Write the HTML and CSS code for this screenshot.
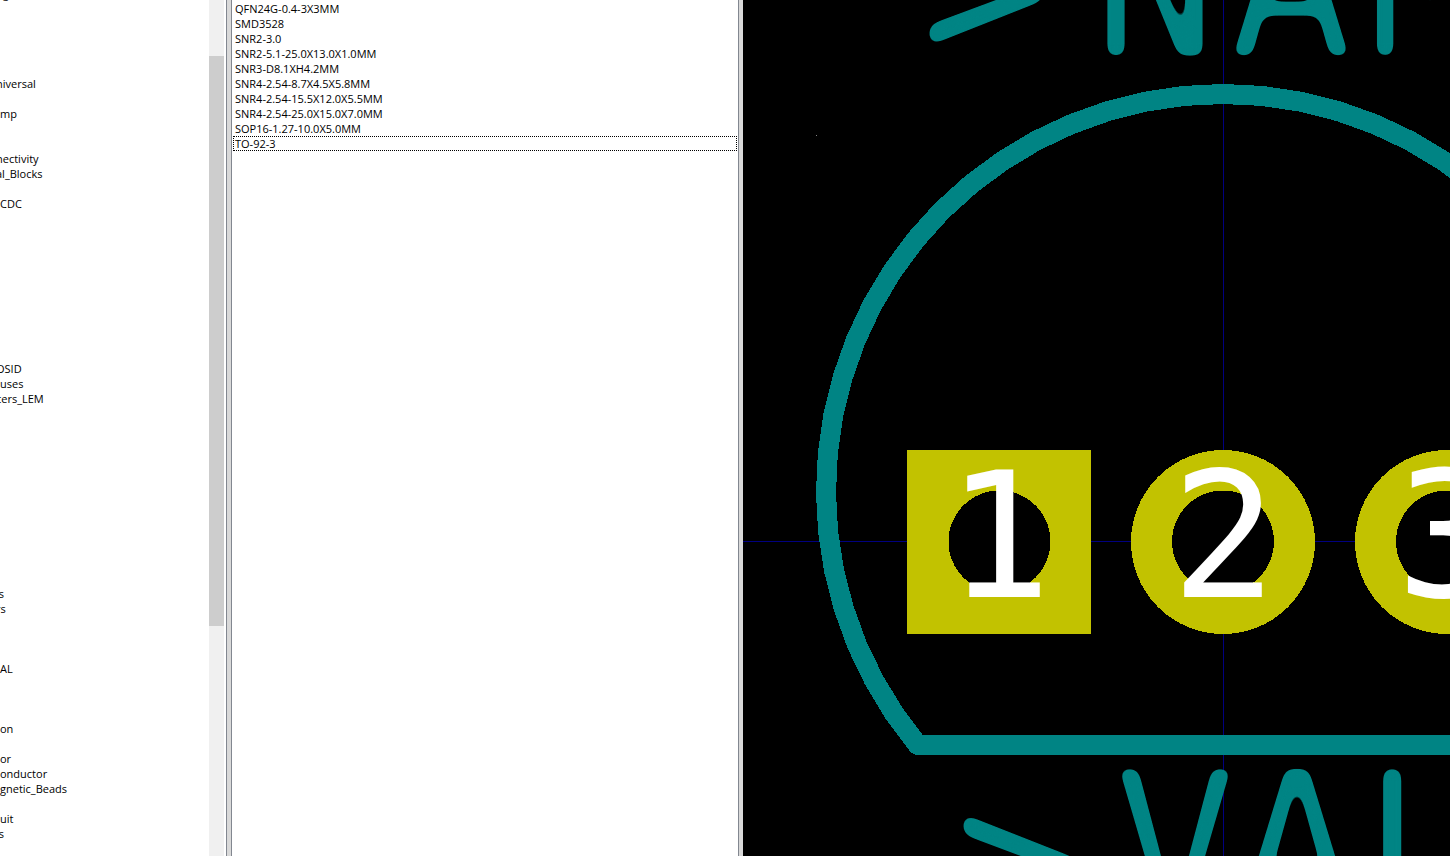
FILE: index.html
```html
<!DOCTYPE html>
<html lang="en">
<head>
<meta charset="utf-8">
<title>Footprint Library Browser</title>
<link rel="stylesheet" href="styles.css">
</head>
<body>
<main class="browser">
  <section class="pane libraries" aria-label="Libraries">
    <ul class="list library-list">
      <li>&nbsp;g</li><li></li><li></li><li></li><li></li><li></li>
      <li class="cut">niversal</li><li></li>
      <li>mp</li><li></li><li></li>
      <li class="cut">nectivity</li>
      <li class="cut">al_Blocks</li><li></li>
      <li>CDC</li><li></li><li></li><li></li><li></li><li></li><li></li><li></li><li></li><li></li><li></li>
      <li class="cut">OSID</li>
      <li>uses</li>
      <li class="cut">cers_LEM</li><li></li><li></li><li></li><li></li><li></li><li></li><li></li><li></li><li></li><li></li><li></li><li></li>
      <li class="cut">ls</li>
      <li class="cut">rs</li><li></li><li></li><li></li>
      <li>AL</li><li></li><li></li><li></li>
      <li>on</li><li></li>
      <li>or</li>
      <li>onductor</li>
      <li>gnetic_Beads</li><li></li>
      <li>uit</li>
      <li class="cut">ls</li><li></li>
    </ul>
    <div class="scrollbar"><div class="thumb"></div></div>
  </section>
  <div class="sash"></div>
  <section class="pane footprints" aria-label="Footprints">
    <ul class="list footprint-list">
      <li>QFN24G-0.4-3X3MM</li>
      <li>SMD3528</li>
      <li>SNR2-3.0</li>
      <li>SNR2-5.1-25.0X13.0X1.0MM</li>
      <li>SNR3-D8.1XH4.2MM</li>
      <li>SNR4-2.54-8.7X4.5X5.8MM</li>
      <li>SNR4-2.54-15.5X12.0X5.5MM</li>
      <li>SNR4-2.54-25.0X15.0X7.0MM</li>
      <li>SOP16-1.27-10.0X5.0MM</li>
      <li class="focused">TO-92-3</li>
    </ul>
  </section>
  <div class="sash"></div>
  <section class="canvas" aria-label="Footprint preview">
    <svg class="board" viewBox="743 0 707 856" preserveAspectRatio="xMidYMid slice">
      <defs>
        <filter id="pen" filterUnits="userSpaceOnUse" x="743" y="-160" width="900" height="1200" color-interpolation-filters="sRGB">
          <feGaussianBlur stdDeviation="6"/>
          <feComponentTransfer><feFuncA type="linear" slope="16" intercept="-9"/></feComponentTransfer>
        </filter>
        <filter id="wide-pen" filterUnits="userSpaceOnUse" x="743" y="-160" width="900" height="1200" color-interpolation-filters="sRGB">
          <feGaussianBlur stdDeviation="6"/>
          <feComponentTransfer><feFuncA type="linear" slope="16" intercept="-7"/></feComponentTransfer>
        </filter>
      </defs>
      <path class="axis" d="M743 541.5H1450M1223.5 0V856"/>
      <rect class="grid-dot" x="816" y="135" width="1" height="1"/>
      <path class="outline" d="M917.7 744.8L894.2 713.6L874 680.2L857 644.9L843.7 608.2L834 570.3L828.1 531.7L826 492.7L827.8 453.7L833.3 415L842.7 377.1L855.7 340.3L872.3 304.9L892.3 271.3L915.5 239.9L941.6 210.9L970.6 184.6L1001.9 161.3L1035.4 141.1L1070.7 124.4L1107.5 111.2L1145.3 101.7L1184 95.9L1223 94L1262 95.9L1300.7 101.7L1338.5 111.2L1375.3 124.4L1410.6 141.1L1444.1 161.3L1475.4 184.6L1528 745Z"/>
      <g class="silk">
        <text class="mark" x="920" y="60">&gt;</text>
        <text class="label" x="1155 1291 1430" y="57">NAM</text>
        <text class="mark" x="954" y="937">&gt;</text>
        <text class="label" x="1175 1297 1423" y="921">VAL</text>
      </g>
      <rect class="pad" x="907" y="450" width="184" height="184"/>
      <circle class="pad" cx="1223" cy="542" r="92"/>
      <circle class="pad" cx="1447" cy="542" r="92"/>
      <circle class="hole" cx="999.500" cy="541.500" r="51"/>
      <circle class="hole" cx="1223" cy="541.500" r="51"/>
      <circle class="hole" cx="1447" cy="541.500" r="51"/>
      <text class="pin" x="999" y="597">1</text>
      <text class="pin" x="1224" y="597">2</text>
      <text class="pin" x="1449" y="597">3</text>
    </svg>
  </section>
</main>
</body>
</html>
```
FILE: styles.css
```css
* {
  box-sizing: border-box;
}

body {
  margin: 0;
  background: #fff;
  color: #000;
  font: 11px/15px "Open Sans", "Noto Sans", sans-serif;
}

.browser {
  display: grid;
  grid-template-columns: 227px 4px 508px 4px minmax(0, 1fr);
  height: 100vh;
  overflow: hidden;
}

.pane {
  display: flex;
  min-height: 0;
  overflow: hidden;
  background: #fff;
  border-right: 1px solid #828790;
}

.footprints {
  border-left: 1px solid #828790;
}

.sash {
  background: #d9d9d9;
}

.list {
  flex: 1;
  min-width: 0;
  margin: 0;
  padding: 0;
  list-style: none;
  white-space: nowrap;
}

.list li {
  height: 15px;
  overflow: hidden;
}

.library-list {
  margin-top: -14px;
}

.library-list .cut {
  text-indent: -4px;
}

.scrollbar {
  width: 15px;
  margin-right: 2px;
  padding-top: 56px;
  background: #f0f0f0;
}

.thumb {
  height: 570px;
  background: #cdcdcd;
}

.footprint-list {
  padding: 1px;
}

.footprint-list li {
  padding-left: 2px;
}

.footprint-list .focused {
  padding-left: 1px;
  border: 1px dotted #000;
  line-height: 13px;
}

.canvas {
  min-width: 0;
  min-height: 0;
  overflow: hidden;
  background: #000;
}

.board {
  display: block;
  width: 100%;
  height: 100%;
}

.axis {
  stroke: #000080;
  stroke-width: 1px;
  shape-rendering: crispEdges;
}

.grid-dot {
  fill: #848484;
}

.outline {
  fill: none;
  stroke: #008484;
  stroke-width: 20px;
  stroke-linejoin: round;
  shape-rendering: crispEdges;
}

.silk {
  fill: #008484;
}

.label,
.mark,
.pin {
  font-family: "DejaVu Sans Mono", monospace;
}

.label {
  font-size: 210px;
  text-anchor: middle;
  filter: url(#pen);
}

.mark {
  font-size: 220px;
  filter: url(#wide-pen);
}

.pad {
  fill: #c2c200;
  shape-rendering: crispEdges;
}

.hole {
  fill: #000;
  shape-rendering: crispEdges;
}

.pin {
  fill: #fff;
  font-size: 175px;
  text-anchor: middle;
}
```
